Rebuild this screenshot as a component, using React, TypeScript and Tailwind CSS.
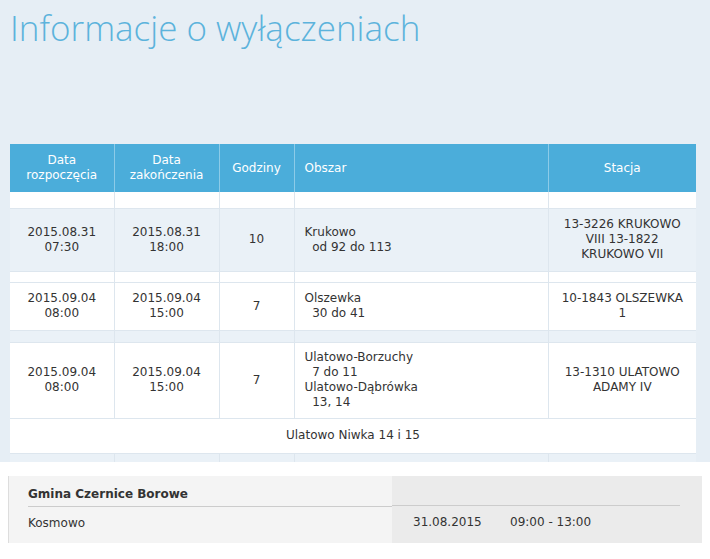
export default function App() {
  const cell = "border-r border-[#dde6ee] text-center align-middle"
  const rows = [
    {
      start: ["2015.08.31", "07:30"], end: ["2015.08.31", "18:00"], h: "10",
      area: ["Krukowo", "  od 92 do 113"], st: ["13-3226 KRUKOWO", "VIII 13-1822", "KRUKOWO VII"],
      bg: "bg-[#eaf1f7]", hgt: "h-[63px]", gapBg: "bg-white", gap: "h-[11px]",
    },
    {
      start: ["2015.09.04", "08:00"], end: ["2015.09.04", "15:00"], h: "7",
      area: ["Olszewka", "  30 do 41"], st: ["10-1843 OLSZEWKA", "1"],
      bg: "bg-white", hgt: "h-[48px]", gapBg: "bg-[#eaf1f7]", gap: "h-[12px]",
    },
    {
      start: ["2015.09.04", "08:00"], end: ["2015.09.04", "15:00"], h: "7",
      area: ["Ulatowo-Borzuchy", "  7 do 11", "Ulatowo-Dąbrówka", "  13, 14"], st: ["13-1310 ULATOWO", "ADAMY IV"],
      bg: "bg-white", hgt: "h-[76px]", gapBg: "", gap: "",
    },
  ]
  return (
    <div className="w-[710px] h-[559px] bg-white overflow-hidden text-[12px] text-[#333]" style={{ fontFamily: '"DejaVu Sans", Verdana, sans-serif' }}>
      <div className="bg-[#e6eef5] h-[462px] pt-[6px]">
        <h1 className="pl-[10px] text-[#5cb3dc] text-[35px] leading-[44px] font-light" style={{ fontFamily: '"Open Sans", sans-serif' }}>
          Informacje o wyłączeniach
        </h1>
        <table className="ml-[10px] mt-[94px] w-[686px] border-collapse table-fixed">
          <colgroup>
            <col className="w-[104px]" /><col className="w-[105px]" /><col className="w-[75px]" /><col className="w-[254px]" /><col className="w-[148px]" />
          </colgroup>
          <thead>
            <tr className="bg-[#4badda] text-white h-[48px] leading-[15px]">
              <th className="font-normal border-r border-[#8ccbe8]">Data<br />rozpoczęcia</th>
              <th className="font-normal border-r border-[#8ccbe8]">Data<br />zakończenia</th>
              <th className="font-normal border-r border-[#8ccbe8]">Godziny</th>
              <th className="font-normal border-r border-[#8ccbe8] text-left pl-[10px]">Obszar</th>
              <th className="font-normal">Stacja</th>
            </tr>
          </thead>
          <tbody className="leading-[15px]">
            <tr className="h-[16px] bg-white border-b border-[#dde6ee]">
              <td className={cell}></td><td className={cell}></td><td className={cell}></td><td className={cell}></td><td></td>
            </tr>
            {rows.map((r, i) => (
              <>
                <tr key={"r" + i} className={`${r.bg} ${r.hgt} border-b border-[#dde6ee]`}>
                  <td className={cell}>{r.start[0]}<br />{r.start[1]}</td>
                  <td className={cell}>{r.end[0]}<br />{r.end[1]}</td>
                  <td className={cell}>{r.h}</td>
                  <td className={`${cell} text-left pl-[10px] whitespace-pre`}>{r.area.join("\n")}</td>
                  <td className="text-center align-middle">{r.st.map((s, j) => <div key={j}>{s}</div>)}</td>
                </tr>
                {r.gap && (
                  <tr key={"g" + i} className={`${r.gapBg} ${r.gap} border-b border-[#dde6ee]`}>
                    <td className={cell}></td><td className={cell}></td><td className={cell}></td><td className={cell}></td><td></td>
                  </tr>
                )}
              </>
            ))}
            <tr className="h-[35px] bg-white border-b border-[#dde6ee]">
              <td colSpan={5} className="text-center">Ulatowo Niwka 14 i 15</td>
            </tr>
            <tr className="h-[9px] bg-[#eaf1f7]">
              <td className={cell}></td><td className={cell}></td><td className={cell}></td><td className={cell}></td><td></td>
            </tr>
          </tbody>
        </table>
      </div>
      <div className="mt-[14px] mx-[8px] h-[67px] flex bg-[#f4f4f4] border-l border-[#ddd]">
        <div className="w-[383px] pl-[19px] pt-[10px]">
          <div className="font-bold text-[#333] leading-[16px] pb-[4px] border-b border-[#ccc]">Gmina Czernice Borowe</div>
          <div className="pt-[7px]">Kosmowo</div>
        </div>
        <div className="flex-1 bg-[#ebebeb] pt-[10px] pr-[22px]">
          <div className="h-[20px] border-b border-[#ccc]"></div>
          <div className="pt-[7px] flex">
            <span className="ml-[21px] w-[97px]">31.08.2015</span>
            <span>09:00 - 13:00</span>
          </div>
        </div>
      </div>
    </div>
  )
}
